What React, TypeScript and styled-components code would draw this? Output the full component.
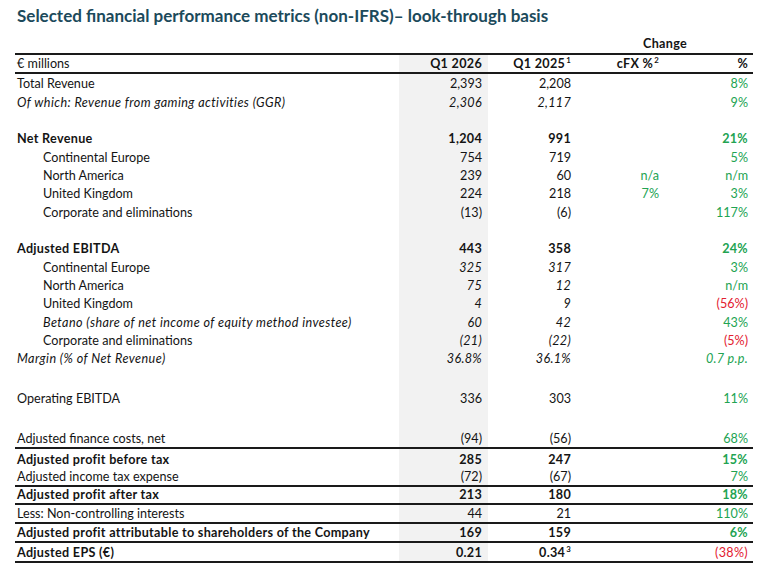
import styled, { createGlobalStyle } from "styled-components";

const GlobalStyle = createGlobalStyle`
  body {
    margin: 0;
    background: #ffffff;
    color: #141414;
    font-family: Lato, "Liberation Sans", sans-serif;
  }
`;

type Line = {
  label?: string;
  q26?: string;
  q25?: string;
  q25sup?: string;
  cfx?: string;
  pct?: string;
  bold?: boolean;
  indent?: boolean;
  italicLabel?: boolean;
  italicNums?: boolean;
  italicPct?: boolean;
  neg?: boolean;
  plainPct?: boolean;
  rule?: boolean;
  h?: number;
};

const ROW = 18.33;

const lines: Line[] = [
  { label: "Total Revenue", q26: "2,393", q25: "2,208", pct: "8%" },
  {
    label: "Of which: Revenue from gaming activities (GGR)",
    q26: "2,306",
    q25: "2,117",
    pct: "9%",
    italicLabel: true,
    italicNums: true,
  },
  {},
  { label: "Net Revenue", q26: "1,204", q25: "991", pct: "21%", bold: true },
  { label: "Continental Europe", q26: "754", q25: "719", pct: "5%", indent: true },
  { label: "North America", q26: "239", q25: "60", cfx: "n/a", pct: "n/m", indent: true },
  { label: "United Kingdom", q26: "224", q25: "218", cfx: "7%", pct: "3%", indent: true },
  { label: "Corporate and eliminations", q26: "(13)", q25: "(6)", pct: "117%", indent: true },
  {},
  { label: "Adjusted EBITDA", q26: "443", q25: "358", pct: "24%", bold: true },
  { label: "Continental Europe", q26: "325", q25: "317", pct: "3%", indent: true, italicNums: true },
  { label: "North America", q26: "75", q25: "12", pct: "n/m", indent: true, italicNums: true },
  { label: "United Kingdom", q26: "4", q25: "9", pct: "(56%)", indent: true, italicNums: true, neg: true },
  {
    label: "Betano (share of net income of equity method investee)",
    q26: "60",
    q25: "42",
    pct: "43%",
    indent: true,
    italicLabel: true,
    italicNums: true,
  },
  {
    label: "Corporate and eliminations",
    q26: "(21)",
    q25: "(22)",
    pct: "(5%)",
    indent: true,
    italicNums: true,
    neg: true,
  },
  {
    label: "Margin (% of Net Revenue)",
    q26: "36.8%",
    q25: "36.1%",
    pct: "0.7 p.p.",
    italicLabel: true,
    italicNums: true,
    italicPct: true,
  },
  { h: 21.5 },
  { label: "Operating EBITDA", q26: "336", q25: "303", pct: "11%" },
  { h: 23 },
  { label: "Adjusted finance costs, net", q26: "(94)", q25: "(56)", pct: "68%", rule: true, h: 19 },
  { label: "Adjusted profit before tax", q26: "285", q25: "247", pct: "15%", bold: true, h: 19 },
  { label: "Adjusted income tax expense", q26: "(72)", q25: "(67)", pct: "7%", rule: true, h: 19 },
  { label: "Adjusted profit after tax", q26: "213", q25: "180", pct: "18%", bold: true, rule: true, h: 18 },
  { label: "Less: Non-controlling interests", q26: "44", q25: "21", pct: "110%", rule: true, h: 19 },
  {
    label: "Adjusted profit attributable to shareholders of the Company",
    q26: "169",
    q25: "159",
    pct: "6%",
    bold: true,
    rule: true,
    h: 19,
  },
  {
    label: "Adjusted EPS (€)",
    q26: "0.21",
    q25: "0.34",
    q25sup: "3",
    pct: "(38%)",
    bold: true,
    neg: true,
    plainPct: true,
    rule: true,
    h: 20,
  },
];

const Page = styled.div`
  padding: 6px 0 0 15px;
`;

const Title = styled.h1`
  margin: 0 0 10px 2px;
  height: 20px;
  font-size: 17px;
  line-height: 20px;
  font-weight: 700;
  color: #1c4a5b;
`;

const Table = styled.div`
  width: 738px;
  font-size: 12.6px;
`;

const Row = styled.div<{ $h: number; $top?: boolean; $rule?: boolean; $bold?: boolean }>`
  display: grid;
  grid-template-columns: 384px 89px 89px 86px 90px;
  box-sizing: border-box;
  height: ${(p) => p.$h}px;
  border-top: ${(p) => (p.$top ? "2px solid #1a1a1a" : "none")};
  border-bottom: ${(p) => (p.$rule ? "2px solid #1a1a1a" : "none")};
  font-weight: ${(p) => (p.$bold ? 700 : 400)};
  letter-spacing: ${(p) => (p.$bold ? "0.3px" : "0")};
`;

const ChangeRow = styled.div`
  display: grid;
  grid-template-columns: 384px 89px 89px 176px;
  height: 17px;
`;

const ChangeHead = styled.div`
  grid-column: 4;
  text-align: center;
  font-weight: 700;
  font-size: 12.6px;
  letter-spacing: 0.3px;
  line-height: 15px;
`;

const Label = styled.div<{ $indent?: boolean; $italic?: boolean; $plain?: boolean }>`
  align-self: end;
  padding: 0 0 1px ${(p) => (p.$indent ? 28 : 2)}px;
  line-height: 15px;
  white-space: nowrap;
  font-style: ${(p) => (p.$italic ? "italic" : "normal")};
  ${(p) => (p.$italic ? "letter-spacing: 0.42px;" : "")}
  ${(p) => (p.$plain ? "font-weight: 400; letter-spacing: 0;" : "")}
`;

const Num = styled.div<{ $shade?: boolean; $italic?: boolean; $pad?: number }>`
  align-self: stretch;
  display: flex;
  align-items: flex-end;
  justify-content: flex-end;
  padding: 0 ${(p) => p.$pad ?? 6}px 1px 0;
  line-height: 15px;
  white-space: nowrap;
  background: ${(p) => (p.$shade ? "#f2f2f2" : "transparent")};
  font-style: ${(p) => (p.$italic ? "italic" : "normal")};
  ${(p) => (p.$italic ? "letter-spacing: 0.3px;" : "")}
`;

const Change = styled(Num)<{ $neg?: boolean; $plain?: boolean }>`
  color: ${(p) => (p.$neg ? "#e3202f" : "#22a352")};
  font-weight: ${(p) => (p.$plain ? 400 : "inherit")};
`;

const Sup = styled.span`
  display: inline-block;
  font-size: 0.62em;
  line-height: 1;
  vertical-align: top;
  position: relative;
  top: 1px;
  margin-left: 1px;
`;

export default function App() {
  return (
    <Page>
      <GlobalStyle />
      <Title>Selected financial performance metrics (non-IFRS)– look-through basis</Title>
      <Table>
        <ChangeRow>
          <ChangeHead>Change</ChangeHead>
        </ChangeRow>
        <Row $h={21} $top $rule $bold>
          <Label $plain>€ millions</Label>
          <Num $shade>
            <span>Q1 2026</span>
          </Num>
          <Num>
            <span>
              Q1 2025<Sup>1</Sup>
            </span>
          </Num>
          <Num $pad={4}>
            <span>
              cFX %<Sup>2</Sup>
            </span>
          </Num>
          <Num $pad={5}>
            <span>%</span>
          </Num>
        </Row>
        {lines.map((l, i) => (
          <Row key={i} $h={l.h ?? ROW} $rule={l.rule} $bold={l.bold}>
            <Label $indent={l.indent} $italic={l.italicLabel}>
              {l.label}
            </Label>
            <Num $shade $italic={l.italicNums}>
              <span>{l.q26}</span>
            </Num>
            <Num $italic={l.italicNums}>
              <span>
                {l.q25}
                {l.q25sup && <Sup>{l.q25sup}</Sup>}
              </span>
            </Num>
            <Change $pad={4}>
              <span>{l.cfx}</span>
            </Change>
            <Change $pad={5} $neg={l.neg} $plain={l.plainPct} $italic={l.italicPct}>
              <span>{l.pct}</span>
            </Change>
          </Row>
        ))}
      </Table>
    </Page>
  );
}
